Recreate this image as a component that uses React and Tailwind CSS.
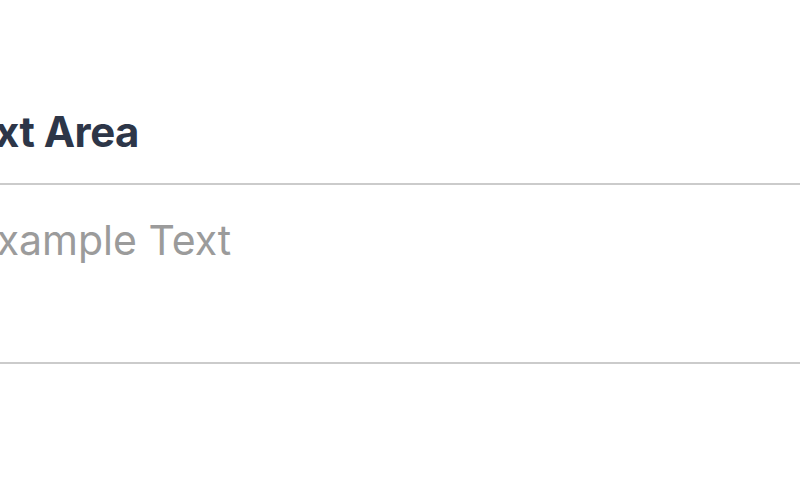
export default function App() {
  return (
    <div className="w-[800px] h-[500px] bg-white overflow-hidden" style={{ fontFamily: 'Inter, "Noto Sans", sans-serif' }}>
      <div className="ml-[-64px] w-[900px] pt-[105px]">
        <div className="text-[42px] leading-[54px] font-bold text-[#2d3648] tracking-[-0.5px] ml-[11px]">Text Area</div>
        <div className="mt-[24px] h-[181px] border-y-2 border-[#cbcbcb] pt-[31px] pl-[36px]">
          <div className="text-[41px] leading-[48px] text-[#9b9b9b] tracking-[0px]">Example Text</div>
        </div>
      </div>
    </div>
  );
}
